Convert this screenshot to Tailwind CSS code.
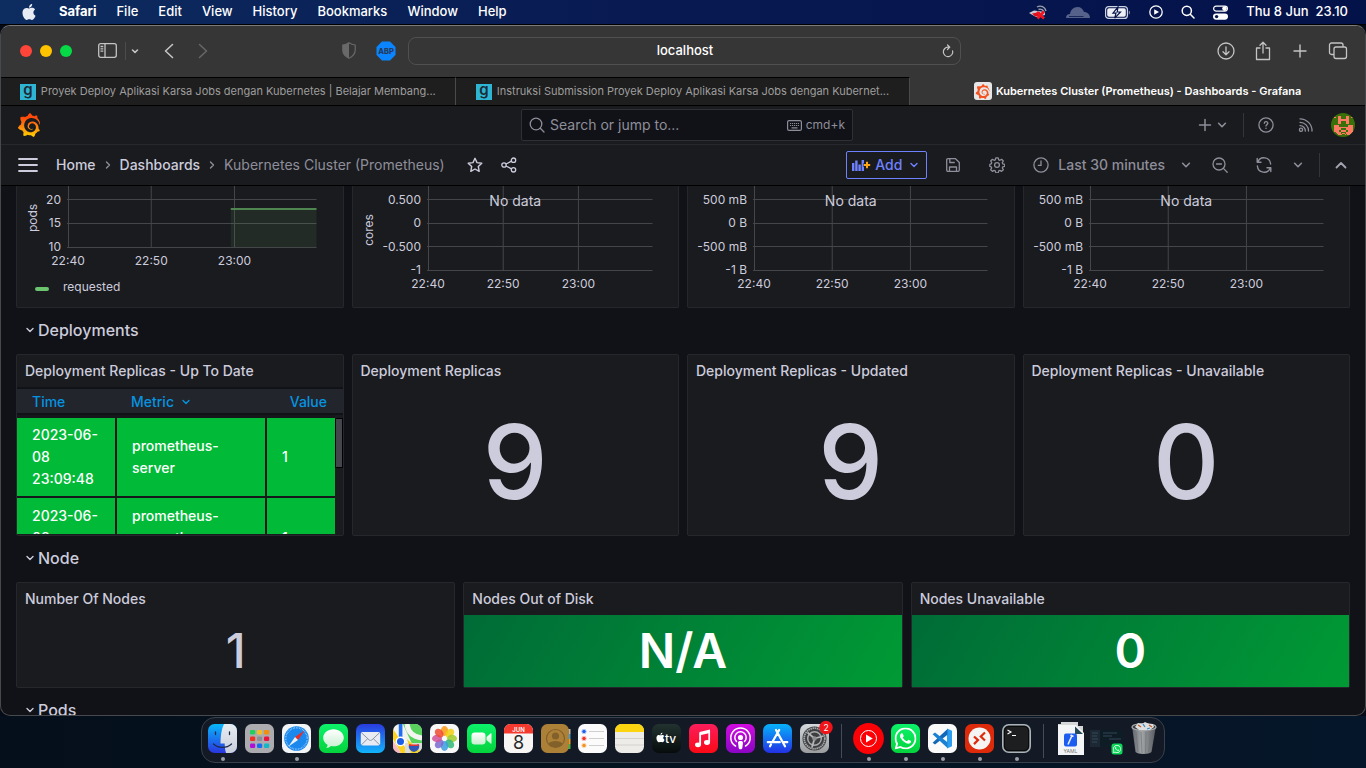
<!DOCTYPE html>
<html lang="en">
<head>
<meta charset="utf-8">
<meta name="viewport" content="width=device-width, initial-scale=1">
<title>Kubernetes Cluster (Prometheus) - Dashboards - Grafana</title>
<script src="https://cdn.jsdelivr.net/npm/@tailwindcss/browser@4"></script>
</head>
<body class="flex h-screen flex-col overflow-hidden bg-[#040b17] font-['Inter','Liberation_Sans',sans-serif] text-[#ccccdc]">

<svg class="absolute size-0" aria-hidden="true">
  <defs>
    <linearGradient id="flame" x1="0" y1="0" x2="0" y2="1"><stop offset="0.2" stop-color="#ff4a0a"/><stop offset="0.6" stop-color="#ff8a0a"/><stop offset="1" stop-color="#ffd400"/></linearGradient>
    <linearGradient id="gGreen" x1="0" y1="0" x2="0" y2="1"><stop offset="0" stop-color="#0cf26a"/><stop offset="1" stop-color="#04d33c"/></linearGradient>
    <linearGradient id="gMail" x1="0" y1="0" x2="0" y2="1"><stop offset="0" stop-color="#2a3be0"/><stop offset="1" stop-color="#12b4fb"/></linearGradient>
    <linearGradient id="gStore" x1="0" y1="0" x2="0" y2="1"><stop offset="0" stop-color="#06b2fa"/><stop offset="1" stop-color="#2331e6"/></linearGradient>
    <linearGradient id="gMusic" x1="0" y1="0" x2="0" y2="1"><stop offset="0" stop-color="#fb1d5c"/><stop offset="1" stop-color="#fb0a16"/></linearGradient>
    <linearGradient id="gPod" x1="0" y1="0" x2="0" y2="1"><stop offset="0" stop-color="#d20be0"/><stop offset="1" stop-color="#8a05c4"/></linearGradient>
    <linearGradient id="gBlue" x1="0" y1="0" x2="0" y2="1"><stop offset="0" stop-color="#08b8fb"/><stop offset="1" stop-color="#2b35e0"/></linearGradient>
    <linearGradient id="gFace" x1="0" y1="0" x2="0" y2="1"><stop offset="0" stop-color="#e9edf3"/><stop offset="1" stop-color="#c8cedb"/></linearGradient>
    <linearGradient id="gBubble" x1="0" y1="0" x2="0" y2="1"><stop offset="0" stop-color="#ffffff"/><stop offset="1" stop-color="#c9efd0"/></linearGradient>
    <linearGradient id="gTv" x1="0" y1="0" x2="0" y2="1"><stop offset="0" stop-color="#22332f"/><stop offset="1" stop-color="#070b0c"/></linearGradient>
    <linearGradient id="gBin" x1="0" y1="0" x2="1" y2="0"><stop offset="0" stop-color="#5f6468"/><stop offset="0.4" stop-color="#a2a6a9"/><stop offset="1" stop-color="#55595d"/></linearGradient>
    <linearGradient id="gGear" x1="0" y1="0" x2="0" y2="1"><stop offset="0" stop-color="#d5d9dc"/><stop offset="1" stop-color="#9a9c9e"/></linearGradient>
  </defs>
  <symbol id="grafana" viewBox="0 0 24 24"><path d="M23.02 10.59a8.578 8.578 0 0 0-.862-3.034 8.911 8.911 0 0 0-1.789-2.445c.337-1.342-.413-2.505-.413-2.505-1.292-.08-2.113.4-2.416.62-.052-.02-.102-.044-.154-.064-.22-.089-.446-.172-.677-.247-.231-.073-.47-.14-.711-.197a9.867 9.867 0 0 0-.875-.161C14.557.753 12.94 0 12.94 0c-1.804 1.145-2.147 2.744-2.147 2.744l-.018.093c-.098.029-.2.057-.298.088-.138.042-.275.094-.413.143-.138.055-.275.107-.41.166a8.869 8.869 0 0 0-1.557.87l-.063-.029c-2.497-.955-4.716.195-4.716.195-.203 2.658.996 4.33 1.235 4.636a11.608 11.608 0 0 0-.607 2.635C1.636 12.677.953 15.014.953 15.014c1.926 2.214 4.171 2.351 4.171 2.351.003-.002.006-.002.006-.005.285.509.615.994.986 1.446.156.19.32.371.488.548-.704 2.009.099 3.68.099 3.68 2.144.08 3.553-.937 3.849-1.173a9.784 9.784 0 0 0 3.164.501h.08l.055-.003.107-.002.103-.005.003.002c1.01 1.44 2.788 1.646 2.788 1.646 1.264-1.332 1.337-2.653 1.337-2.94v-.058c0-.02-.003-.039-.003-.06.265-.187.52-.387.758-.6a7.875 7.875 0 0 0 1.415-1.7c1.43.083 2.437-.885 2.437-.885-.236-1.49-1.085-2.216-1.264-2.354l-.018-.013-.016-.013a.217.217 0 0 1-.031-.02c.008-.092.016-.18.02-.27.011-.162.016-.323.016-.48v-.253l-.005-.098-.008-.135a1.891 1.891 0 0 0-.01-.13c-.003-.042-.008-.083-.013-.125l-.016-.124-.018-.122a6.215 6.215 0 0 0-2.032-3.73 6.015 6.015 0 0 0-3.222-1.46 6.292 6.292 0 0 0-.85-.048l-.107.002h-.063l-.044.003-.104.008a4.777 4.777 0 0 0-3.335 1.695c-.332.4-.592.84-.768 1.297a4.594 4.594 0 0 0-.312 1.817l.003.091c.005.055.007.11.013.164a3.615 3.615 0 0 0 .698 1.82 3.53 3.53 0 0 0 1.827 1.282c.33.098.66.14.971.137.039 0 .078 0 .114-.002l.063-.003c.02 0 .041-.003.062-.003.034-.002.065-.007.099-.01.007 0 .018-.003.028-.003l.031-.005.06-.008a1.18 1.18 0 0 0 .112-.02c.036-.008.072-.013.109-.024a2.634 2.634 0 0 0 .914-.415c.028-.02.056-.041.085-.065a.248.248 0 0 0 .039-.35.244.244 0 0 0-.309-.06l-.078.042c-.09.044-.184.083-.283.116a2.476 2.476 0 0 1-.475.096c-.028.003-.054.006-.083.006l-.083.002c-.026 0-.054 0-.08-.002l-.102-.006h-.012l-.024.006c-.016-.003-.031-.003-.044-.006-.031-.002-.06-.007-.091-.01a2.59 2.59 0 0 1-.724-.213 2.557 2.557 0 0 1-.667-.438 2.52 2.52 0 0 1-.805-1.475 2.306 2.306 0 0 1-.029-.444l.006-.122v-.023l.002-.031c.003-.021.003-.04.005-.06a3.163 3.163 0 0 1 1.352-2.29 3.12 3.12 0 0 1 .937-.43 2.946 2.946 0 0 1 .776-.101h.06l.07.002.045.003h.026l.07.005a4.041 4.041 0 0 1 1.635.49 3.94 3.94 0 0 1 1.602 1.662 3.77 3.77 0 0 1 .397 1.414l.005.076.003.075c.002.026.002.05.002.075 0 .024.003.052 0 .07v.065l-.002.073-.008.174a6.195 6.195 0 0 1-.08.639 5.1 5.1 0 0 1-.267.927 5.31 5.31 0 0 1-.624 1.13 5.052 5.052 0 0 1-3.237 2.014 4.82 4.82 0 0 1-.649.066l-.039.003h-.287a6.607 6.607 0 0 1-1.716-.265 6.776 6.776 0 0 1-3.4-2.274 6.75 6.75 0 0 1-.746-1.15 6.616 6.616 0 0 1-.714-2.596l-.005-.083-.002-.02v-.056l-.003-.073v-.096l-.003-.104v-.07l.003-.163c.008-.22.026-.45.054-.678a8.707 8.707 0 0 1 .28-1.355c.128-.444.286-.872.473-1.277a7.04 7.04 0 0 1 1.456-2.1 5.925 5.925 0 0 1 .953-.763c.169-.111.343-.213.524-.306.089-.05.182-.091.273-.135.047-.02.093-.042.138-.062a7.177 7.177 0 0 1 .714-.267l.145-.045c.049-.015.098-.026.148-.041.098-.029.197-.052.296-.076.049-.013.1-.02.15-.033l.15-.032.151-.028.076-.013.075-.01.153-.024c.057-.01.114-.013.171-.023l.169-.021c.036-.003.073-.008.106-.01l.073-.008.036-.003.042-.002c.057-.003.114-.008.171-.01l.086-.006h.023l.037-.003.145-.007a7.999 7.999 0 0 1 1.708.125 7.917 7.917 0 0 1 2.048.68 8.253 8.253 0 0 1 1.672 1.09l.09.077.089.078c.06.052.114.107.171.159.057.052.112.106.166.16.052.055.107.107.159.164a8.671 8.671 0 0 1 1.41 1.978c.012.026.028.052.04.078l.04.078.075.156c.023.051.05.1.07.153l.065.15a8.848 8.848 0 0 1 .45 1.34.19.19 0 0 0 .201.142.186.186 0 0 0 .172-.184c.01-.246.002-.532-.024-.856z"/></symbol>
  <symbol id="apple" viewBox="0 0 24 24"><path d="M12.152 6.896c-.948 0-2.415-1.078-3.96-1.04-2.04.027-3.91 1.183-4.961 3.014-2.117 3.675-.546 9.103 1.519 12.09 1.013 1.454 2.208 3.09 3.792 3.039 1.52-.065 2.09-.987 3.935-.987 1.831 0 2.35.987 3.96.948 1.637-.026 2.676-1.48 3.676-2.948 1.156-1.688 1.636-3.325 1.662-3.415-.039-.013-3.182-1.221-3.22-4.857-.026-3.04 2.48-4.494 2.597-4.559-1.429-2.09-3.623-2.324-4.39-2.376-2-.156-3.675 1.09-4.61 1.09zM15.53 3.83c.843-1.012 1.4-2.427 1.245-3.83-1.207.052-2.662.805-3.532 1.818-.78.896-1.454 2.338-1.273 3.714 1.338.104 2.715-.688 3.559-1.701"/></symbol>
  <symbol id="whatsapp" viewBox="0 0 24 24"><path d="M17.472 14.382c-.297-.149-1.758-.867-2.03-.967-.273-.099-.471-.148-.67.15-.197.297-.767.966-.94 1.164-.173.199-.347.223-.644.075-.297-.15-1.255-.463-2.39-1.475-.883-.788-1.48-1.761-1.653-2.059-.173-.297-.018-.458.13-.606.134-.133.298-.347.446-.52.149-.174.198-.298.298-.497.099-.198.05-.371-.025-.52-.075-.149-.669-1.612-.916-2.207-.242-.579-.487-.5-.669-.51-.173-.008-.371-.01-.57-.01-.198 0-.52.074-.792.372-.272.297-1.04 1.016-1.04 2.479 0 1.462 1.065 2.875 1.213 3.074.149.198 2.096 3.2 5.077 4.487.709.306 1.262.489 1.694.625.712.227 1.36.195 1.871.118.571-.085 1.758-.719 2.006-1.413.248-.694.248-1.289.173-1.413-.074-.124-.272-.198-.57-.347m-5.421 7.403h-.004a9.87 9.87 0 01-5.031-1.378l-.361-.214-3.741.982.998-3.648-.235-.374a9.86 9.86 0 01-1.51-5.26c.001-5.45 4.436-9.884 9.888-9.884 2.64 0 5.122 1.03 6.988 2.898a9.825 9.825 0 012.893 6.994c-.003 5.45-4.437 9.884-9.885 9.884m8.413-18.297A11.815 11.815 0 0012.05 0C5.495 0 .16 5.335.157 11.892c0 2.096.547 4.142 1.588 5.945L.057 24l6.305-1.654a11.882 11.882 0 005.683 1.448h.005c6.554 0 11.89-5.335 11.893-11.893a11.821 11.821 0 00-3.48-8.413z"/></symbol>
  <symbol id="chev" viewBox="0 0 16 16"><path d="M5 6.500l3 3 3-3" fill="none" stroke="currentColor" stroke-width="1.400" stroke-linecap="round" stroke-linejoin="round"/></symbol>
</svg>

<!-- Menu bar -->
<header class="flex h-[25px] shrink-0 items-center border-b border-black bg-linear-to-r from-[#0d2c60] via-[#081850] to-[#04124a] pr-[18px] pl-[21px] text-[13px] font-medium text-white">
  <svg class="mr-[22px] size-[16px] fill-[#e8ebf3]" role="img" aria-label="Apple menu"><use href="#apple"/></svg>
  <nav class="flex items-center gap-5">
    <a href="#" class="font-bold">Safari</a><a href="#">File</a><a href="#">Edit</a><a href="#">View</a><a href="#">History</a><a href="#">Bookmarks</a><a href="#">Window</a><a href="#">Help</a>
  </nav>
  <div class="ml-auto flex items-center">
    <svg class="mr-[18px] h-4 w-[20px]" viewBox="0 0 20 16"><path d="M9 3a6 6 0 0 1 9 4M10.500 5.500a4 4 0 0 1 5.500 3" fill="none" stroke="#9aa0ac" stroke-width="1.400"/><path d="M1 9l5-2.500L17 8v3L8 13z" fill="#c8cbd6"/><path d="M4 9.500l8-1.500 1 4-6 .500z" fill="#e01020"/><path d="M9 8l7 6.500M16 7.500L9.500 14.500" stroke="#f01420" stroke-width="2.600"/></svg>
    <svg class="mr-[15px] h-[11px] w-6 fill-[#56628a]" viewBox="0 0 24 11"><path d="M0 11c0-2.500 1.500-4 4-4 .500-4 3.500-7 7.500-7C15 0 17 2 18 5c3.500 0 6 2.500 6 6z"/><path d="M3 9.500h14.500" stroke="#0a1a50" stroke-width=".8"/></svg>
    <svg class="mr-[18px] h-[13px] w-[26px]" viewBox="0 0 26 13"><rect x=".6" y=".6" width="21.800" height="11.800" rx="3" fill="none" stroke="#cdd3e4" stroke-width="1.200"/><rect x="2.200" y="2.200" width="18.600" height="8.600" rx="1.800" fill="#eef0f6"/><path d="M23.800 4.500v4c1.300-.4 1.300-3.600 0-4z" fill="#aab"/><path d="M13 .8L8 7.200h3l-1.300 5L15.500 6h-3.300z" fill="#eef0f6" stroke="#07164c" stroke-width="1.200"/></svg>
    <svg class="mr-[18px] size-[14px]" viewBox="0 0 14 14"><circle cx="7" cy="7" r="6.200" fill="none" stroke="#fff" stroke-width="1.300"/><path d="M5.200 4.200v5.600L10 7z" fill="#fff"/></svg>
    <svg class="mr-[18px] size-[14px]" viewBox="0 0 14 14" fill="none" stroke="#fff" stroke-width="1.500" stroke-linecap="round"><circle cx="5.800" cy="5.800" r="4.600"/><path d="M9.300 9.300l3.700 3.700"/></svg>
    <svg class="mr-[18px] size-[15px]" viewBox="0 0 15 15"><rect x=".6" y="1.100" width="13.800" height="5" rx="2.500" fill="none" stroke="#fff" stroke-width="1.200"/><circle cx="11.500" cy="3.600" r="2.300" fill="#fff"/><rect x="0" y="8.500" width="15" height="6.200" rx="3.100" fill="#fff"/><circle cx="3.600" cy="11.600" r="1.700" fill="#07164c"/></svg>
    <time class="whitespace-pre">Thu 8 Jun  23.10</time>
  </div>
</header>

<!-- Browser window -->
<div class="flex min-h-0 flex-1 flex-col overflow-hidden rounded-[10px] border border-[#48494c] border-t-[#7a7a7a] bg-[#111217]">
  <div class="flex h-[51px] shrink-0 items-center bg-[#363636] pb-[2px] text-[#c4c4c4]">
    <div class="flex flex-1 items-center pl-[19px]">
      <div class="flex gap-2">
        <button class="size-3 rounded-full bg-[#ff453a]" aria-label="Close"></button>
        <button class="size-3 rounded-full bg-[#ffc300]" aria-label="Minimise"></button>
        <button class="size-3 rounded-full bg-[#06da46]" aria-label="Zoom"></button>
      </div>
      <button class="ml-[26px]" aria-label="Sidebar"><svg class="block h-[15px] w-[19px]" viewBox="0 0 19 15" fill="none" stroke="currentColor" stroke-width="1.300"><rect x=".7" y=".7" width="17.600" height="13.600" rx="2"/><path d="M7 .7v13.600M2.500 3.500h2.800M2.500 5.800h2.800M2.500 8.100h2.800"/></svg></button>
      <div class="ml-2 h-[18px] w-px bg-[#4c4c4c]"></div>
      <button class="ml-[1px]" aria-label="Tab groups"><svg class="block size-4" viewBox="0 0 16 16" fill="none" stroke="currentColor" stroke-width="1.600" stroke-linecap="round" stroke-linejoin="round"><path d="M5.500 7L8 9.300 10.500 7"/></svg></button>
      <button class="ml-[21px]" aria-label="Back"><svg class="block h-4 w-[10px]" viewBox="0 0 10 16" fill="none" stroke="currentColor" stroke-width="1.600" stroke-linecap="round" stroke-linejoin="round"><path d="M8.500 1.500L1.500 8l7 6.500"/></svg></button>
      <button class="ml-6 text-[#666]" aria-label="Forward"><svg class="block h-4 w-[10px]" viewBox="0 0 10 16" fill="none" stroke="currentColor" stroke-width="1.600" stroke-linecap="round" stroke-linejoin="round"><path d="M1.500 1.500L8.500 8l-7 6.500"/></svg></button>
      <button class="mr-5 ml-auto" aria-label="Privacy report"><svg class="block h-[17px] w-[14px]" viewBox="0 0 14 17"><path d="M7 .8c2 1.400 4 2 6.200 2.200V8c0 4-2.500 6.500-6.200 8.200C3.300 14.500.8 12 .8 8V3C3 2.800 5 2.200 7 .8z" fill="none" stroke="#696969" stroke-width="1.200"/><path d="M7 .8C5 2.200 3 2.800.8 3v5c0 4 2.500 6.500 6.200 8.200z" fill="#696969"/></svg></button>
      <button class="mr-3" aria-label="Adblock Plus"><svg class="block size-5" viewBox="0 0 20 20"><path d="M6 .5h8L19.500 6v8L14 19.500H6L.5 14V6z" fill="#0a84ff"/><text x="10" y="12.800" text-anchor="middle" font-size="7.500" font-weight="800" fill="#263a5a">ABP</text></svg></button>
    </div>
    <div class="flex h-7 w-[553px] items-center rounded-[8px] border border-[#505050] px-[5px]">
      <span class="w-4"></span>
      <input class="min-w-0 flex-1 bg-transparent text-center text-[13px] font-medium text-white" aria-label="Address" value="localhost">
      <button aria-label="Reload"><svg class="block size-[14px]" viewBox="0 0 14 14" fill="none" stroke="currentColor" stroke-width="1.200" stroke-linecap="round" stroke-linejoin="round"><path d="M11.600 6.800A4.700 4.700 0 1 1 7 3.200h1.200M6.500 1l2.300 2.200L6.500 5.500"/></svg></button>
    </div>
    <div class="flex flex-1 items-center justify-end gap-[19px] pr-[17px]">
      <button aria-label="Downloads"><svg class="block size-[18px]" viewBox="0 0 18 18" fill="none" stroke="currentColor" stroke-width="1.300" stroke-linecap="round" stroke-linejoin="round"><circle cx="9" cy="9" r="8"/><path d="M9 5v7.500M6 9.800l3 2.900 3-2.900"/></svg></button>
      <button aria-label="Share"><svg class="block h-[20px] w-[18px]" viewBox="0 0 18 20" fill="none" stroke="currentColor" stroke-width="1.300" stroke-linecap="round" stroke-linejoin="round"><path d="M6 7H2.500v11.500h13V7H12M9 12V1.500M6 4.200l3-3 3 3"/></svg></button>
      <button aria-label="New tab"><svg class="block size-[18px]" viewBox="0 0 18 18" fill="none" stroke="currentColor" stroke-width="1.400" stroke-linecap="round"><path d="M9 3v12M3 9h12"/></svg></button>
      <button aria-label="Show tabs"><svg class="block size-[20px]" viewBox="0 0 20 20" fill="none" stroke="currentColor" stroke-width="1.300"><rect x="6" y="6" width="12.500" height="11.500" rx="2"/><path d="M6 13.500H3.500a2 2 0 0 1-2-2V4a2 2 0 0 1 2-2H13a2 2 0 0 1 2 2v2"/></svg></button>
    </div>
  </div>
  <nav class="grid h-[29px] shrink-0 grid-cols-3 border-b border-black text-[11px]">
    <a href="#" class="flex min-w-0 items-center justify-center gap-[5px] border-t border-r border-t-black border-r-[#4a4a4a] bg-[#1e1e1e] text-[#9d9d9d]"><svg class="size-4 shrink-0" viewBox="0 0 16 16"><path d="M0 0h16v16H0z" fill="#2fb5d4"/><text x="8" y="11" text-anchor="middle" font-size="15" font-weight="600" fill="#1c2b33">g</text></svg><span class="truncate">Proyek Deploy Aplikasi Karsa Jobs dengan Kubernetes | Belajar Membang...</span></a>
    <a href="#" class="flex min-w-0 items-center justify-center gap-[5px] border-t border-r border-t-black border-r-[#4a4a4a] bg-[#1e1e1e] text-[#9d9d9d]"><svg class="size-4 shrink-0" viewBox="0 0 16 16"><path d="M0 0h16v16H0z" fill="#2fb5d4"/><text x="8" y="11" text-anchor="middle" font-size="15" font-weight="600" fill="#1c2b33">g</text></svg><span class="truncate">Instruksi Submission Proyek Deploy Aplikasi Karsa Jobs dengan Kubernet...</span></a>
    <a href="#" class="flex min-w-0 items-center justify-center gap-1 bg-[#363636] font-semibold text-white"><span class="flex size-[18px] shrink-0 items-center justify-center rounded-[3px] bg-[#e6e6e6]"><svg class="size-[15px] fill-[#f4511e]"><use href="#grafana"/></svg></span><span class="truncate">Kubernetes Cluster (Prometheus) - Dashboards - Grafana</span></a>
  </nav>

  <!-- Grafana top bar -->
  <div class="flex h-[39px] shrink-0 items-center border-b border-[#27282d] bg-[#1a1b1f] pr-2 pl-4 text-[#8e8e9a]">
    <div class="flex-1"><a href="#" class="block w-6" aria-label="Grafana"><svg class="block size-6" fill="url(#flame)"><use href="#grafana"/></svg></a></div>
    <div class="flex h-8 w-[332px] items-center rounded-[2px] border border-[#2f3036] bg-[#111217] px-[7px]">
      <svg class="size-4 shrink-0" viewBox="0 0 16 16" fill="none" stroke="currentColor" stroke-width="1.300" stroke-linecap="round"><circle cx="7" cy="7" r="5.800"/><path d="M11.300 11.300L15 15"/></svg>
      <input class="ml-[5px] min-w-0 flex-1 bg-transparent text-sm placeholder:text-[#8e8e9a]" placeholder="Search or jump to..." aria-label="Search or jump to">
      <svg class="mr-1 h-[11px] w-[15px]" viewBox="0 0 15 11"><rect x=".6" y=".6" width="13.800" height="9.800" rx="1.500" fill="none" stroke="currentColor" stroke-width="1.200"/><path d="M3 3.500h9M3 5.500h9" stroke="currentColor" stroke-width="1.200" stroke-dasharray="1.200 .8"/><path d="M4.500 7.900h6" stroke="currentColor" stroke-width="1.200"/></svg>
      <kbd class="font-[Inter,sans-serif] text-xs">cmd+k</kbd>
    </div>
    <div class="flex flex-1 items-center justify-end">
      <button class="flex items-center" aria-label="New"><svg class="size-4" viewBox="0 0 16 16" stroke="currentColor" stroke-width="1.500" stroke-linecap="round"><path d="M8 2.500v11M2.500 8h11"/></svg><svg class="size-[18px]"><use href="#chev"/></svg></button>
      <div class="mr-[14px] ml-3 h-6 w-px bg-[#34353b]"></div>
      <button aria-label="Help"><svg class="block size-4" viewBox="0 0 16 16" fill="none" stroke="currentColor" stroke-width="1.300" stroke-linecap="round"><circle cx="8" cy="8" r="7.100"/><path d="M6.300 6.300c.2-2.400 3.700-2.100 3.500.1C9.700 7.600 8 7.700 8 9M8 11.200v.2"/></svg></button>
      <button class="ml-6" aria-label="News"><svg class="block size-4" viewBox="0 0 16 16" fill="none" stroke="currentColor" stroke-width="1.300" stroke-linecap="round"><circle cx="3" cy="12.800" r="1.600"/><path d="M2 8.600a5.200 5.200 0 0 1 5.300 5.500M2 5.300a8.500 8.500 0 0 1 8.500 8.800M2 1.800a12 12 0 0 1 12 12.300"/></svg></button>
      <button class="mr-[2px] ml-[17px]" aria-label="Profile"><svg class="block size-6 rounded-full" viewBox="0 0 24 24" shape-rendering="crispEdges"><path d="M0 0h24v24H0z" fill="#3a7008"/><path d="M7 3h3v3h5V3h3v8h-3V8h-5v3H7zM3 4h2v1H3zM20 4h2v1h-2zM3 12h5v2h2v3H8v2h2v3H7l-3-3H3zM22 12h-5v2h-2v3h2v2h-2v3h3l3-3h1zM10 14h5v1h-5zM10 17h5v2h-5zM9 21h2v1H9zM14 21h2v1h-2zM11 20h3v1h-3z" fill="#ff7a64"/></svg></button>
    </div>
  </div>
  <div class="flex h-[41px] shrink-0 items-center border-b border-black bg-[#1a1b1f] pr-3 pl-[17px] text-sm">
    <button aria-label="Toggle menu"><svg class="block h-[14px] w-5" viewBox="0 0 20 14" stroke="#ccccdc" stroke-width="1.800" stroke-linecap="round"><path d="M1 1h18M1 7h18M1 13h18"/></svg></button>
    <nav class="ml-[18px] flex items-center font-medium">
      <a href="#">Home</a>
      <svg class="mx-1 size-4 -rotate-90 text-[#8e8e9a]"><use href="#chev"/></svg>
      <a href="#">Dashboards</a>
      <svg class="mx-1 size-4 -rotate-90 text-[#8e8e9a]"><use href="#chev"/></svg>
      <span class="font-normal text-[#8e8e9a]">Kubernetes Cluster (Prometheus)</span>
    </nav>
    <button class="ml-[22px]" aria-label="Mark as favorite"><svg class="block size-4" viewBox="0 0 16 16" fill="none" stroke="#ccccdc" stroke-width="1.400" stroke-linejoin="round"><path d="M8 1.300l2 4.300 4.800.600-3.500 3.300.900 4.800L8 12l-4.200 2.300.900-4.800L1.200 6.200 6 5.600z"/></svg></button>
    <button class="ml-[18px]" aria-label="Share dashboard"><svg class="block size-4" viewBox="0 0 16 16" fill="none" stroke="#ccccdc" stroke-width="1.300"><circle cx="3" cy="8" r="2.200"/><circle cx="12.500" cy="3.200" r="2.200"/><circle cx="12.500" cy="12.800" r="2.200"/><path d="M5 7l5.500-2.800M5 9l5.500 2.800"/></svg></button>
    <div class="ml-auto flex items-center text-[#8e8e9a]">
      <button class="flex h-7 items-center gap-1 rounded-[2px] border border-[#6e82ff] pr-1 pl-[5px] font-medium text-[#6e82ff]"><svg class="h-3 w-[19px]" viewBox="0 0 19 12"><path d="M0 4h2.400v8H0zM3.200 1.500h2.400V12H3.200zM6.400 5.500h2.400V12H6.400zM9.600 1h2.400v11H9.600z" fill="#6e82ff"/><path d="M15 2.500v7M11.500 6h7" stroke="#1a1b1f" stroke-width="4"/><path d="M15 2.800v6.400M11.800 6h6.400" stroke="#ffa412" stroke-width="2"/></svg>Add<svg class="size-4"><use href="#chev"/></svg></button>
      <button class="ml-[18px]" aria-label="Save dashboard"><svg class="block size-4" viewBox="0 0 16 16" fill="none" stroke="currentColor" stroke-width="1.300" stroke-linejoin="round"><path d="M1.700 3c0-.8.500-1.300 1.300-1.300h7.500l3.800 3.800V13c0 .8-.5 1.300-1.300 1.300H3c-.8 0-1.300-.5-1.300-1.300zM4.500 14v-4h7v4M4.800 2v3.500h5"/></svg></button>
      <button class="ml-7" aria-label="Dashboard settings"><svg class="block size-4" viewBox="0 0 16 16" fill="none" stroke="currentColor" stroke-width="1.300" stroke-linejoin="round"><circle cx="8" cy="8" r="2.400"/><path d="M6.800 .9h2.400l.5 1.900 1.200.5 1.700-1 1.700 1.700-1 1.700.5 1.200 1.900.5v1.900l-1.900.5-.5 1.200 1 1.700-1.700 1.700-1.700-1-1.200.5-.5 1.900H6.800l-.5-1.900-1.200-.5-1.700 1-1.700-1.700 1-1.700-.5-1.200-1.400-.5V7.400l1.400-.5.5-1.200-1-1.700 1.700-1.700 1.700 1 1.200-.5z"/></svg></button>
      <button class="ml-7 flex items-center font-medium"><svg class="mr-[9px] size-4" viewBox="0 0 16 16" fill="none" stroke="currentColor" stroke-width="1.300" stroke-linecap="round"><circle cx="8" cy="8" r="7.100"/><path d="M8 4v4.300H5.300"/></svg>Last 30 minutes<svg class="ml-3 size-[18px]"><use href="#chev"/></svg></button>
      <button class="ml-[17px]" aria-label="Zoom out"><svg class="block size-4" viewBox="0 0 16 16" fill="none" stroke="currentColor" stroke-width="1.300" stroke-linecap="round"><circle cx="7" cy="7" r="6"/><path d="M11.400 11.400L15.200 15.200M4.500 7h5"/></svg></button>
      <button class="ml-7" aria-label="Refresh"><svg class="block size-4" viewBox="0 0 16 16" fill="none" stroke="currentColor" stroke-width="1.400" stroke-linecap="round" stroke-linejoin="round"><path d="M1.200 1.500v3.800H5M1.700 5A6.700 6.700 0 0 1 14.600 7M14.800 14.500v-3.800H11M14.300 11A6.700 6.700 0 0 1 1.400 9"/></svg></button>
      <button class="ml-[17px]" aria-label="Refresh interval"><svg class="block size-[18px]"><use href="#chev"/></svg></button>
      <div class="ml-3 h-6 w-px bg-[#34353b]"></div>
      <button class="ml-[9px]" aria-label="Hide controls"><svg class="block size-6" viewBox="0 0 24 24" fill="none" stroke="#a4a4b2" stroke-width="1.800" stroke-linecap="round" stroke-linejoin="round"><path d="M7.500 14.500L12 10l4.500 4.500"/></svg></button>
    </div>
  </div>

  <!-- Dashboard -->
  <main class="min-h-0 flex-1 overflow-hidden px-[15px]">
    <div class="grid grid-cols-4 gap-2 text-xs">
      <section class="h-[122px] rounded-b-[2px] border border-t-0 border-[#26272c] bg-[#1a1b1f] pr-[26px] pl-[51px]">
        <svg class="block h-[93px] w-full overflow-visible fill-[#ccccdc]" role="img" aria-label="Pods requested">
          <g stroke="#45464a"><path d="M0.500 0v61.500"/><line x1="33.500%" x2="33.500%" y1="0" y2="61"/><line x1="67%" x2="67%" y1="0" y2="61"/><line x1="-1" x2="100%" y1="13.500" y2="13.500"/><line x1="-1" x2="100%" y1="37.500" y2="37.500"/><line x1="-1" x2="100%" y1="61.500" y2="61.500"/></g>
          <rect x="65.500%" y="23" width="34.500%" height="38" fill="#73bf69" fill-opacity=".1"/>
          <line x1="65.500%" x2="100%" y1="23" y2="23" stroke="#4f8650" stroke-width="2"/>
          <g text-anchor="end"><text x="-7" y="18">20</text><text x="-7" y="41">15</text><text x="-7" y="65">10</text></g>
          <g text-anchor="middle"><text x="0" y="79">22:40</text><text x="33.500%" y="79">22:50</text><text x="67%" y="79">23:00</text><text transform="translate(-31 32) rotate(-90)">pods</text></g>
        </svg>
        <button class="-ml-[33px] flex items-center gap-[14px]"><span class="mt-1 h-1 w-[14px] rounded-full bg-[#6cc46f]"></span>requested</button>
      </section>
      <section class="relative h-[122px] rounded-b-[2px] border border-t-0 border-[#26272c] bg-[#1a1b1f] pr-[26px] pl-[75px]">
        <svg class="block h-[110px] w-full overflow-visible fill-[#ccccdc]" role="img" aria-label="Cluster CPU capacity">
          <g stroke="#45464a"><path d="M0.500 0v84.500"/><line x1="33.500%" x2="33.500%" y1="0" y2="84"/><line x1="67%" x2="67%" y1="0" y2="84"/><line x1="-1" x2="100%" y1="13.500" y2="13.500"/><line x1="-1" x2="100%" y1="37.500" y2="37.500"/><line x1="-1" x2="100%" y1="60.500" y2="60.500"/><line x1="-1" x2="100%" y1="84.500" y2="84.500"/></g>
          <g text-anchor="end"><text x="-7" y="18">0.500</text><text x="-7" y="41">0</text><text x="-7" y="65">-0.500</text><text x="-7" y="88">-1</text></g>
          <g text-anchor="middle"><text x="0" y="102">22:40</text><text x="33.500%" y="102">22:50</text><text x="67%" y="102">23:00</text><text transform="translate(-55 44) rotate(-90)">cores</text></g>
        </svg>
        <p class="absolute inset-x-0 top-[5px] text-center text-sm">No data</p>
      </section>
      <section class="relative h-[122px] rounded-b-[2px] border border-t-0 border-[#26272c] bg-[#1a1b1f] pr-[26px] pl-[66px]">
        <svg class="block h-[110px] w-full overflow-visible fill-[#ccccdc]" role="img" aria-label="Cluster memory capacity">
          <g stroke="#45464a"><path d="M0.500 0v84.500"/><line x1="33.500%" x2="33.500%" y1="0" y2="84"/><line x1="67%" x2="67%" y1="0" y2="84"/><line x1="-1" x2="100%" y1="13.500" y2="13.500"/><line x1="-1" x2="100%" y1="37.500" y2="37.500"/><line x1="-1" x2="100%" y1="60.500" y2="60.500"/><line x1="-1" x2="100%" y1="84.500" y2="84.500"/></g>
          <g text-anchor="end"><text x="-7" y="18">500 mB</text><text x="-7" y="41">0 B</text><text x="-7" y="65">-500 mB</text><text x="-7" y="88">-1 B</text></g>
          <g text-anchor="middle"><text x="0" y="102">22:40</text><text x="33.500%" y="102">22:50</text><text x="67%" y="102">23:00</text></g>
        </svg>
        <p class="absolute inset-x-0 top-[5px] text-center text-sm">No data</p>
      </section>
      <section class="relative h-[122px] rounded-b-[2px] border border-t-0 border-[#26272c] bg-[#1a1b1f] pr-[26px] pl-[66px]">
        <svg class="block h-[110px] w-full overflow-visible fill-[#ccccdc]" role="img" aria-label="Cluster disk capacity">
          <g stroke="#45464a"><path d="M0.500 0v84.500"/><line x1="33.500%" x2="33.500%" y1="0" y2="84"/><line x1="67%" x2="67%" y1="0" y2="84"/><line x1="-1" x2="100%" y1="13.500" y2="13.500"/><line x1="-1" x2="100%" y1="37.500" y2="37.500"/><line x1="-1" x2="100%" y1="60.500" y2="60.500"/><line x1="-1" x2="100%" y1="84.500" y2="84.500"/></g>
          <g text-anchor="end"><text x="-7" y="18">500 mB</text><text x="-7" y="41">0 B</text><text x="-7" y="65">-500 mB</text><text x="-7" y="88">-1 B</text></g>
          <g text-anchor="middle"><text x="0" y="102">22:40</text><text x="33.500%" y="102">22:50</text><text x="67%" y="102">23:00</text></g>
        </svg>
        <p class="absolute inset-x-0 top-[5px] text-center text-sm">No data</p>
      </section>
    </div>

    <h2><button class="flex h-[46px] items-center pb-[2px] pl-[6px] text-base font-medium"><svg class="size-4"><use href="#chev"/></svg>Deployments</button></h2>
    <div class="grid grid-cols-4 gap-2">
      <section class="relative h-[182px] rounded-[2px] border border-[#26272c] bg-[#1a1b1f]">
        <h3 class="flex h-8 items-center px-2 text-sm font-medium">Deployment Replicas - Up To Date</h3>
        <div class="h-[147px] overflow-hidden">
        <table class="w-full table-fixed border-separate border-spacing-0 text-left text-sm leading-[22px] font-medium">
          <colgroup><col class="w-[100px]"><col class="w-[150px]"><col class="w-[68px]"><col></colgroup>
          <thead><tr class="text-[#0693e0]">
            <th class="border-y-2 border-[#111217] bg-[#22252b] pt-[2px] pl-[15px] font-medium">Time</th>
            <th class="border-y-2 border-[#111217] bg-[#22252b] pt-[2px] pl-[14px] font-medium"><span class="flex items-center gap-1">Metric<svg class="size-4"><use href="#chev"/></svg></span></th>
            <th class="border-y-2 border-[#111217] bg-[#22252b] pt-[2px] pr-2 text-right font-medium">Value</th>
            <td class="border-y-2 border-[#111217] bg-[#22252b]"></td>
          </tr></thead>
          <tbody class="text-white">
            <tr class="h-[83px]">
              <td class="border-t-[3px] border-r-2 border-b-2 border-[#15171b] bg-[#01bb38] pl-[15px]">2023-06-<br>08<br>23:09:48</td>
              <td class="border-t-[3px] border-r-2 border-b-2 border-[#15171b] bg-[#01bb38] pl-[15px]">prometheus-<br>server</td>
              <td class="border-t-[3px] border-b-2 border-[#15171b] bg-[#01bb38] pl-[15px]">1</td>
              <td></td>
            </tr>
            <tr class="h-[82px]">
              <td class="border-r-2 border-b-2 border-[#15171b] bg-[#01bb38] pl-[15px]">2023-06-<br>08<br>23:09:48</td>
              <td class="border-r-2 border-b-2 border-[#15171b] bg-[#01bb38] pl-[15px]">prometheus-<br>prometheus-<br>pushgateway</td>
              <td class="border-b-2 border-[#15171b] bg-[#01bb38] pl-[15px]">1</td>
              <td></td>
            </tr>
          </tbody>
        </table>
        </div>
        <div class="absolute top-[63px] right-0 h-[50px] w-2 border border-black bg-[#45454d]"></div>
      </section>
      <section class="flex h-[182px] flex-col rounded-[2px] border border-[#26272c] bg-[#1a1b1f]">
        <h3 class="flex h-8 items-center px-2 text-sm font-medium">Deployment Replicas</h3>
        <p class="flex flex-1 items-center justify-center text-[103px] leading-none font-medium">9</p>
      </section>
      <section class="flex h-[182px] flex-col rounded-[2px] border border-[#26272c] bg-[#1a1b1f]">
        <h3 class="flex h-8 items-center px-2 text-sm font-medium">Deployment Replicas - Updated</h3>
        <p class="flex flex-1 items-center justify-center text-[103px] leading-none font-medium">9</p>
      </section>
      <section class="flex h-[182px] flex-col rounded-[2px] border border-[#26272c] bg-[#1a1b1f]">
        <h3 class="flex h-8 items-center px-2 text-sm font-medium">Deployment Replicas - Unavailable</h3>
        <p class="flex flex-1 items-center justify-center text-[103px] leading-none font-medium">0</p>
      </section>
    </div>

    <h2><button class="flex h-[46px] items-center pb-[2px] pl-[6px] text-base font-medium"><svg class="size-4"><use href="#chev"/></svg>Node</button></h2>
    <div class="grid grid-cols-3 gap-2">
      <section class="flex h-[106px] flex-col rounded-[2px] border border-[#26272c] bg-[#1a1b1f]">
        <h3 class="flex h-8 items-center px-2 text-sm font-medium">Number Of Nodes</h3>
        <p class="flex flex-1 items-center justify-center text-[48px] leading-none font-medium">1</p>
      </section>
      <section class="flex h-[106px] flex-col rounded-[2px] border border-[#26272c] bg-[#1a1b1f]">
        <h3 class="flex h-8 items-center px-2 text-sm font-medium">Nodes Out of Disk</h3>
        <p class="flex flex-1 items-center justify-center bg-[linear-gradient(120deg,#006b37,#009a35)] text-[48px] leading-none font-semibold text-white">N/A</p>
      </section>
      <section class="flex h-[106px] flex-col rounded-[2px] border border-[#26272c] bg-[#1a1b1f]">
        <h3 class="flex h-8 items-center px-2 text-sm font-medium">Nodes Unavailable</h3>
        <p class="flex flex-1 items-center justify-center bg-[linear-gradient(120deg,#006b37,#009a35)] text-[48px] leading-none font-semibold text-white">0</p>
      </section>
    </div>
    <h2><button class="flex h-[46px] items-center pb-[2px] pl-[6px] text-base font-medium"><svg class="size-4"><use href="#chev"/></svg>Pods</button></h2>
  </main>
</div>

<!-- Dock -->
<footer class="flex h-[52px] shrink-0 justify-center bg-[linear-gradient(90deg,#050f1c,#04131f_50%,#06162a)] pt-px">
  <nav class="flex h-[46px] items-start gap-2 rounded-[14px] border border-[#3a404a] bg-[#131a25] pt-[6px] pr-[5px] pl-[6px]" aria-label="Dock">
    <a href="#" class="flex w-[29px] flex-col items-center gap-1" aria-label="Finder">
      <svg class="size-[29px] overflow-visible" viewBox="0 0 29 29"><rect width="29" height="29" rx="6.500" fill="url(#gBlue)"/><path d="M16 0h6.500A6.500 6.500 0 0 1 29 6.500v16a6.500 6.500 0 0 1-6.500 6.500h-4.500c-1-3.500-1.300-6.500-1.300-9.500H12.500C12.500 12 13.500 5 16 0z" fill="url(#gFace)"/><path d="M7.500 8v2.500M21.500 8v2.500M5.500 20c5 4.500 13 4.500 18 0" fill="none" stroke="#1a2a4a" stroke-width="1.300" stroke-linecap="round"/></svg>
      <span class="size-1 rounded-full bg-[#9da0a8]"></span></a>
    <a href="#" class="w-[29px]" aria-label="Launchpad"><svg class="size-[29px]" viewBox="0 0 29 29"><rect width="29" height="29" rx="6.500" fill="#acacb0"/><rect x="5" y="6" width="5.200" height="4.500" rx="1.300" fill="#1fd05a"/><rect x="12" y="6" width="5.200" height="4.500" rx="1.300" fill="#f0c020"/><rect x="19" y="6" width="5.200" height="4.500" rx="1.300" fill="#f09010"/><rect x="5" y="12.500" width="5.200" height="4.500" rx="1.300" fill="#f03020"/><rect x="12" y="12.500" width="5.200" height="4.500" rx="1.300" fill="#8d8d93"/><rect x="19" y="12.500" width="5.200" height="4.500" rx="1.300" fill="#f01040"/><rect x="5" y="19.500" width="5.200" height="4.500" rx="1.300" fill="#b010d8"/><rect x="12" y="19.500" width="5.200" height="4.500" rx="1.300" fill="#1470f0"/><rect x="19" y="19.500" width="5.200" height="4.500" rx="1.300" fill="#10b8c8"/></svg></a>
    <a href="#" class="flex w-[29px] flex-col items-center gap-1" aria-label="Safari"><svg class="size-[29px]" viewBox="0 0 29 29"><rect width="29" height="29" rx="6.500" fill="#f3f4f6"/><circle cx="14.500" cy="14.500" r="12.300" fill="#1b88ee"/><circle cx="14.500" cy="14.500" r="10.700" fill="none" stroke="#bfe0ff" stroke-width="1.300" stroke-dasharray=".6 1"/><path d="M22.500 6.500l-6.500 9.500-3-3z" fill="#f02a20"/><path d="M6.500 22.500L13 13l3 3z" fill="#eef0f4"/></svg><span class="size-1 rounded-full bg-[#9da0a8]"></span></a>
    <a href="#" class="w-[29px]" aria-label="Messages"><svg class="size-[29px]" viewBox="0 0 29 29"><rect width="29" height="29" rx="6.500" fill="url(#gGreen)"/><path d="M14.500 5.200c-5.800 0-10.300 3.700-10.300 8.500 0 3 1.700 5.500 4.300 7 0 1.400-.5 2.400-1.300 3.300 1.900 0 3.600-.8 4.700-2 .8.200 1.700.300 2.600.300 5.800 0 10.300-3.800 10.300-8.600s-4.500-8.500-10.300-8.500z" fill="url(#gBubble)"/></svg></a>
    <a href="#" class="w-[29px]" aria-label="Mail"><svg class="size-[29px]" viewBox="0 0 29 29"><rect width="29" height="29" rx="6.500" fill="url(#gMail)"/><rect x="4.800" y="8" width="19.400" height="13.400" rx="1.800" fill="#e8ecf2"/><path d="M5.500 8.800l7.500 7c1 .8 2 .8 3 0l7.500-7M5.500 20.800l6-6M23.500 20.800l-6-6" fill="none" stroke="#8b95a5" stroke-width="1"/></svg></a>
    <a href="#" class="w-[29px]" aria-label="Maps"><svg class="size-[29px] rounded-[7px]" viewBox="0 0 29 29"><path d="M0 0h29v29H0z" fill="#f2f2ee"/><path d="M10 0h19v20H19z" fill="#58d25c"/><path d="M14 0c1 8 6 13 15 14" fill="none" stroke="#f4f5f2" stroke-width="5"/><path d="M0 5l12 18v6H8L0 15z" fill="#fcd21e"/><path d="M0 17l8 12H0z" fill="#f8b8c0"/><path d="M12 19h17v10H12z" fill="#dcdcda"/><path d="M14 15l15 14H18z" fill="#fad01c"/><path d="M5.800 0h3.600v18H5.800z" fill="#1d6ef0"/><circle cx="7.500" cy="17.500" r="4.200" fill="#1a5fe8" stroke="#fff" stroke-width="1.400"/><path d="M16 20.500c3 .8 7 .8 10 0 1 3.500-1 6.500-5 7.500-4-1-6-4-5-7.500z" fill="#3158b8"/><path d="M16.200 20c3 .8 6.600.8 9.600 0v2h-9.600z" fill="#e03438"/></svg></a>
    <a href="#" class="w-[29px]" aria-label="Photos"><svg class="size-[29px]" viewBox="0 0 29 29"><rect width="29" height="29" rx="6.500" fill="#f8f8f8"/><g transform="translate(14.500 14.500)" fill-opacity=".85"><ellipse cy="-7.500" rx="3.700" ry="5" fill="#fa9a14"/><ellipse cy="-7.500" rx="3.700" ry="5" fill="#f0d010" transform="rotate(45)"/><ellipse cy="-7.500" rx="3.700" ry="5" fill="#9ccc2c" transform="rotate(90)"/><ellipse cy="-7.500" rx="3.700" ry="5" fill="#30b878" transform="rotate(135)"/><ellipse cy="-7.500" rx="3.700" ry="5" fill="#3aa0e0" transform="rotate(180)"/><ellipse cy="-7.500" rx="3.700" ry="5" fill="#7a68d0" transform="rotate(225)"/><ellipse cy="-7.500" rx="3.700" ry="5" fill="#d05098" transform="rotate(270)"/><ellipse cy="-7.500" rx="3.700" ry="5" fill="#f04a30" transform="rotate(315)"/></g></svg></a>
    <a href="#" class="w-[29px]" aria-label="FaceTime"><svg class="size-[29px]" viewBox="0 0 29 29"><rect width="29" height="29" rx="6.500" fill="url(#gGreen)"/><rect x="4.500" y="8.500" width="14" height="12" rx="3.200" fill="url(#gBubble)"/><path d="M19.500 13l4-3.500c.6-.4 1-.2 1 .5v9c0 .7-.4.900-1 .500l-4-3.500z" fill="url(#gBubble)"/></svg></a>
    <a href="#" class="w-[29px]" aria-label="Calendar"><svg class="size-[29px]" viewBox="0 0 29 29"><rect width="29" height="29" rx="6.500" fill="#f7f6f5"/><path d="M0 9.500v-3A6.500 6.500 0 0 1 6.500 0h16A6.500 6.500 0 0 1 29 6.500v3z" fill="#f5392f"/><text x="14.500" y="7.500" text-anchor="middle" font-size="6" font-weight="600" fill="#fff">JUN</text><text x="14.500" y="24.500" text-anchor="middle" font-size="18" fill="#2a2a2c">8</text></svg></a>
    <a href="#" class="w-[29px]" aria-label="Contacts"><svg class="size-[29px] overflow-visible" viewBox="0 0 29 29"><path d="M27 5h2.500v5H27z" fill="#b8b8b8"/><path d="M27 10h2.500v5H27z" fill="#38a0e0"/><path d="M27 15h2.500v5H27z" fill="#f09a20"/><path d="M27 20h2.500v5H27z" fill="#30b848"/><rect width="28" height="29" rx="6.500" fill="#ad8038"/><circle cx="14.500" cy="14.500" r="9" fill="none" stroke="#82602a" stroke-width="1.200"/><circle cx="14.500" cy="12" r="3.600" fill="#82602a"/><path d="M7.500 19.500c2-3.500 12-3.500 14 0-3 5-11 5-14 0z" fill="#82602a"/></svg></a>
    <a href="#" class="w-[29px]" aria-label="Reminders"><svg class="size-[29px]" viewBox="0 0 29 29"><rect width="29" height="29" rx="6.500" fill="#fbfbfb"/><path d="M11 7.500h15M11 14.500h15M11 21.500h15" stroke="#cfcfd2"/><circle cx="6" cy="7.500" r="2.200" fill="#2260ee" stroke="#b8ccf8"/><circle cx="6" cy="14.500" r="2.200" fill="#f0352c" stroke="#f8c0bc"/><circle cx="6" cy="21.500" r="2.200" fill="#f5921e" stroke="#fadcb8"/></svg></a>
    <a href="#" class="w-[29px]" aria-label="Notes"><svg class="size-[29px]" viewBox="0 0 29 29"><rect width="29" height="29" rx="6.500" fill="#eeece8"/><path d="M0 8V6.500A6.500 6.500 0 0 1 6.500 0h16A6.500 6.500 0 0 1 29 6.500V8z" fill="#fcd410"/><path d="M0 14.500h29M0 21h29" stroke="#d4d2ce"/></svg></a>
    <a href="#" class="w-[29px]" aria-label="TV"><svg class="size-[29px]" viewBox="0 0 29 29"><rect width="29" height="29" rx="6.500" fill="url(#gTv)"/><use href="#apple" x="3.500" y="8.500" width="10" height="10" fill="#fff"/><text x="13" y="18.600" font-size="12" font-weight="500" fill="#fff">tv</text></svg></a>
    <a href="#" class="w-[29px]" aria-label="Music"><svg class="size-[29px]" viewBox="0 0 29 29"><rect width="29" height="29" rx="6.500" fill="url(#gMusic)"/><path d="M10.500 8L21 5.500V9l-9 2v8.800h-1.500z" fill="#fff"/><path d="M11.200 9v11.500M20.200 7v11" stroke="#fff" stroke-width="1.700"/><ellipse cx="9" cy="20.800" rx="3" ry="2.400" fill="#fff"/><ellipse cx="18" cy="18.500" rx="3" ry="2.400" fill="#fff"/></svg></a>
    <a href="#" class="w-[29px]" aria-label="Podcasts"><svg class="size-[29px]" viewBox="0 0 29 29"><rect width="29" height="29" rx="6.500" fill="url(#gPod)"/><g fill="none" stroke="#fff" stroke-width="1.500" stroke-linecap="round"><path d="M9.500 22a9.700 9.700 0 1 1 10 0M10.500 17.500a5.700 5.700 0 1 1 8 0"/></g><circle cx="14.500" cy="13.500" r="2.600" fill="#fff"/><path d="M12 18.500c0-2 5-2 5 0l-.7 5.500c-.2 1.700-3.400 1.700-3.600 0z" fill="#fff"/></svg></a>
    <a href="#" class="w-[29px]" aria-label="App Store"><svg class="size-[29px]" viewBox="0 0 29 29"><rect width="29" height="29" rx="6.500" fill="url(#gStore)"/><path d="M16.200 6L9.500 17.800M8 20.500l-1 1.800M13 6l9 16.300M4.800 18.200h12M20.500 18.200h3.800" fill="none" stroke="#fff" stroke-width="2.200" stroke-linecap="round"/></svg></a>
    <a href="#" class="w-[29px]" aria-label="System Preferences, 2 notifications"><svg class="size-[29px] overflow-visible" viewBox="0 0 29 29"><rect width="29" height="29" rx="6.500" fill="url(#gGear)"/><circle cx="14.500" cy="14.500" r="12" fill="#3c3e40"/><circle cx="14.500" cy="14.500" r="10.300" fill="none" stroke="#a4a6a8" stroke-width="1.800" stroke-dasharray="1.500 .6"/><circle cx="14.500" cy="14.500" r="6.800" fill="none" stroke="#a8aaac" stroke-width="1.500"/><path d="M14.500 14.500L23.500 12M14.500 14.500l-7-6M14.500 14.500L12 23.500" stroke="#b4b6b8" stroke-width="1.800"/><circle cx="14.500" cy="14.500" r="2.300" fill="#8c8e90"/><circle cx="26" cy="3.500" r="6.700" fill="#f01418"/><text x="26" y="6.500" text-anchor="middle" font-size="8.500" fill="#fff">2</text></svg></a>
    <div class="flex w-[9px] justify-center"><span class="h-[34px] w-px bg-[#454c58]"></span></div>
    <a href="#" class="flex w-[29px] flex-col items-center gap-1" aria-label="YouTube Music"><svg class="size-[29px] overflow-visible" viewBox="0 0 29 29"><circle cx="14.500" cy="14.500" r="15.400" fill="#fb0207"/><circle cx="14.500" cy="14.500" r="8" fill="none" stroke="#fff" stroke-width="1"/><path d="M12 10.500v8l6.800-4z" fill="#fff"/></svg><span class="size-1 rounded-full bg-[#9da0a8]"></span></a>
    <a href="#" class="flex w-[29px] flex-col items-center gap-1" aria-label="WhatsApp"><svg class="size-[29px]" viewBox="0 0 29 29"><rect width="29" height="29" rx="6.500" fill="url(#gGreen)"/><use href="#whatsapp" x="3.500" y="3.500" width="22" height="22" fill="#fff"/></svg><span class="size-1 rounded-full bg-[#9da0a8]"></span></a>
    <a href="#" class="flex w-[29px] flex-col items-center gap-1" aria-label="Visual Studio Code"><svg class="size-[29px]" viewBox="0 0 29 29"><rect width="29" height="29" rx="6.500" fill="#fafafa"/><path d="M19 4.500l5 2.300v15.400l-5 2.300z" fill="#2a9df0"/><path d="M19.500 5v5.800L7 20.600 4.600 18.800z" fill="#1268b8"/><path d="M19.500 24v-5.800L7 8.400l-2.400 1.800z" fill="#1a80d2"/></svg><span class="size-1 rounded-full bg-[#9da0a8]"></span></a>
    <a href="#" class="flex w-[29px] flex-col items-center gap-1" aria-label="Remote Desktop"><svg class="size-[29px]" viewBox="0 0 29 29"><rect width="29" height="29" rx="6.500" fill="#dc2a0a"/><circle cx="14.500" cy="14.500" r="11" fill="#f6f4f3"/><path d="M9 12.500l4 3.600-4 4M20 8.500l-4.200 4 4.200 4" fill="none" stroke="#dc2a0a" stroke-width="2.200"/></svg><span class="size-1 rounded-full bg-[#9da0a8]"></span></a>
    <a href="#" class="flex w-[29px] flex-col items-center gap-1" aria-label="Terminal"><svg class="size-[29px]" viewBox="0 0 29 29"><rect x=".8" y=".8" width="27.400" height="27.400" rx="6" fill="#1d1e20" stroke="#a9b3b8" stroke-width="1.600"/><rect x="2.500" y="2.500" width="24" height="24" rx="4.500" fill="none" stroke="#0a0a0a"/><path d="M5.500 6l3.500 2-3.500 2M10 11.500h4" fill="none" stroke="#fff" stroke-width="1.100"/></svg><span class="size-1 rounded-full bg-[#9da0a8]"></span></a>
    <div class="flex w-[9px] justify-center"><span class="h-[34px] w-px bg-[#454c58]"></span></div>
    <a href="#" class="w-[29px]" aria-label="YAML files"><svg class="size-[29px] overflow-visible" viewBox="0 0 29 29"><path d="M5-2h17v4h5v26H2V0h3z" fill="#d4d6d8"/><path d="M2 1h18l8 8v22H2z" fill="#f4f5f6"/><path d="M19 2.500v7.500h8z" fill="#274a58"/><rect x="8" y="9.500" width="13" height="13" rx="2" fill="#1c5cf0"/><path d="M12 20.500l4-9M14.500 11l3 1.500" stroke="#e8eef8" stroke-width="1.600"/><text x="14.500" y="29" text-anchor="middle" font-size="5" fill="#777">YAML</text></svg></a>
    <a href="#" class="w-[29px]" aria-label="Minimised window"><svg class="size-[29px] overflow-visible" viewBox="0 0 29 29"><path d="M-3 6h33v17H-3z" fill="#0e1c26"/><path d="M-3 6h10v17H-3z" fill="#1c2833"/><path d="M-1 9h6M-1 12h5M-1 15h6M-1 18h5M10 9h14M10 12h9M16 15h12" stroke="#3d5260" stroke-width=".8"/><rect x="18.500" y="19.500" width="11" height="11" rx="2.500" fill="#0bd858"/><use href="#whatsapp" x="20" y="21" width="8" height="8" fill="#fff"/></svg></a>
    <a href="#" class="w-[29px]" aria-label="Bin"><svg class="size-[29px] overflow-visible" viewBox="0 0 29 29"><path d="M2 2l3.500 26c2 2.500 14 2.500 16 0L26 2z" fill="url(#gBin)"/><path d="M6 8l2 20M11 8l1 21M16 8l-.5 21M21 8l-2.500 20" stroke="#6d7276" stroke-width=".7"/><ellipse cx="14" cy="3" rx="12" ry="3.500" fill="#3a3d40" stroke="#a9adb0" stroke-width="1.200"/><path d="M5 3l3-4 4 1 3-2 4 2 4 0 1 3-4 3H9z" fill="#dcdedf"/><path d="M8 1l3 2M19 1l3 2" stroke="#c05a30" stroke-width="1.300"/><path d="M13 0l2 3M20 4l-3 1" stroke="#3a8abf" stroke-width="1.300"/></svg></a>
  </nav>
</footer>
</body>
</html>
